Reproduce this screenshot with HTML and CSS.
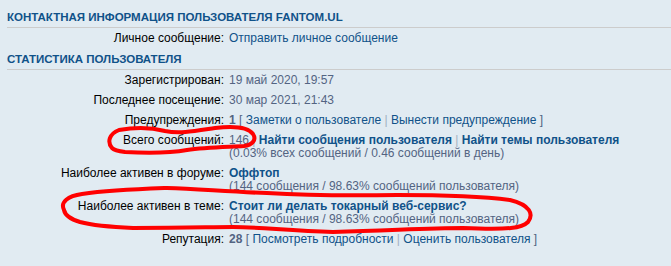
FILE: index.html
```html
<!DOCTYPE html>
<html lang="ru">
<head>
<meta charset="utf-8">
<link rel="stylesheet" href="styles.css">
</head>
<body>
<div class="panel">
  <h3 class="head">Контактная информация пользователя fantom.ul</h3>
  <div class="row"><div class="lbl">Личное сообщение:</div><div class="val"><a class="lnk">Отправить личное сообщение</a></div></div>
  <h3 class="head">Статистика пользователя</h3>
  <div class="row"><div class="lbl">Зарегистрирован:</div><div class="val">19 май 2020, 19:57</div></div>
  <div class="row"><div class="lbl">Последнее посещение:</div><div class="val">30 мар 2021, 21:43</div></div>
  <div class="row"><div class="lbl">Предупреждения:</div><div class="val"><b class="num">1</b> <span class="br">[</span> <a class="lnk">Заметки о пользователе</a> <span class="sep">|</span> <a class="lnk">Вынести предупреждение</a> <span class="br">]</span></div></div>
  <div class="row"><div class="lbl">Всего сообщений:</div><div class="val">146 <span class="sep">|</span> <a class="lnk strong">Найти сообщения пользователя</a> <span class="sep">|</span> <a class="lnk strong">Найти темы пользователя</a><br>(0.03% всех сообщений / 0.46 сообщений в день)</div></div>
  <div class="row"><div class="lbl">Наиболее активен в форуме:</div><div class="val"><a class="lnk strong">Оффтоп</a><br>(144 сообщения / 98.63% сообщений пользователя)</div></div>
  <div class="row"><div class="lbl">Наиболее активен в теме:</div><div class="val"><a class="lnk strong">Стоит ли делать токарный веб-сервис?</a><br>(144 сообщения / 98.63% сообщений пользователя)</div></div>
  <div class="row"><div class="lbl">Репутация:</div><div class="val"><b class="num">28</b> <span class="br">[</span> <a class="lnk">Посмотреть подробности</a> <span class="sep">|</span> <a class="lnk">Оценить пользователя</a> <span class="br">]</span></div></div>
</div>
<svg class="marks" width="671" height="266" viewBox="0 0 671 266">
  <path d="M112 148 C107 142 109 134 119 130 C135 127 150 127 165 131 C180 134 195 131 215 128 C232 126 248 127 253 134 C257 140 252 145 244 146 C225 147 205 147 187 150 C170 153 145 153 125 152 C118 151 114 150 112 148 Z"/>
  <path d="M64 210 C60 202 68 196 82 194 C110 190 140 189 167 188 C200 189 230 192 267 193 C300 195 330 196 397 195 C440 195 480 196 510 200 C530 205 534 214 528 222 C522 228 510 230 463 228 C430 228 400 230 333 232 C290 231 260 227 233 227 C210 227 190 228 133 228 C110 227 95 226 80 222 C70 219 65 215 64 210 Z"/>
</svg>
</body>
</html>
```
FILE: styles.css
```css
html, body {
  margin: 0;
  padding: 0;
  background: #e1ebf2;
}
body {
  width: 671px;
  height: 266px;
  position: relative;
  overflow: hidden;
  font-family: "Liberation Sans", Arial, sans-serif;
  font-size: 12px;
  color: #000;
}
.panel {
  padding: 6px 0 0 7px;
}
.head {
  margin: 0;
  font-size: 11.5px;
  font-weight: bold;
  text-transform: uppercase;
  color: #105289;
  line-height: 14px;
  padding: 4px 0 3px;
  border-bottom: 1px solid #cccccc;
}
.row {
  display: flex;
  gap: 5px;
  line-height: 13px;
  padding: 4px 0 3px;
}
.lbl {
  width: 217px;
  text-align: right;
  flex: none;
  color: #000;
}
.val {
  color: #536482;
}
.lnk {
  color: #105289;
  text-decoration: none;
}
.strong { font-weight: bold; }
.num { color: #536482; }
.br { color: #536482; }
.sep { color: #a0b0c0; }
.marks {
  position: absolute;
  left: 0;
  top: 0;
  pointer-events: none;
}
.marks path {
  fill: none;
  stroke: #ff0000;
  stroke-width: 4;
  stroke-linejoin: round;
}
```
